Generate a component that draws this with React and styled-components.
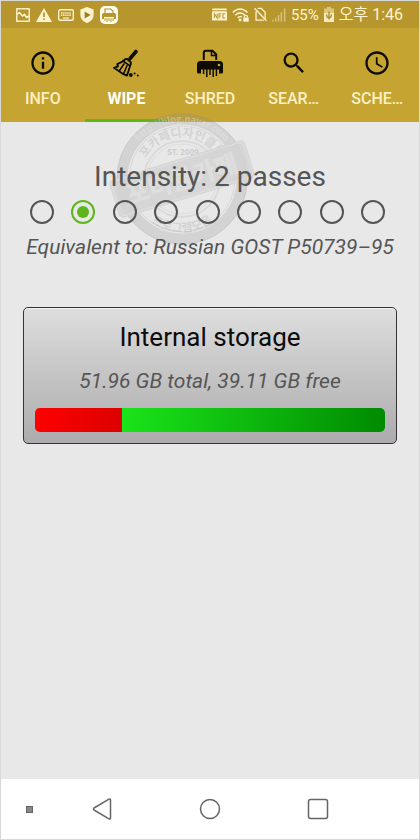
import { useState } from "react";
import styled, { createGlobalStyle } from "styled-components";
import { MdOutlineInfo, MdSearch, MdAccessTime } from "react-icons/md";

const INTENSITY_LEVELS = [1, 2, 3, 4, 5, 6, 7, 8, 9];
const STORAGE = { name: "Internal storage", total: 51.96, free: 39.11 };

const PictureIcon = () => (
  <svg width="14" height="14" viewBox="0 0 14 14" fill="none" stroke="currentColor">
    <rect x="0.8" y="0.8" width="12.4" height="12.4" strokeWidth="1.4" />
    <path d="M1 6.5 3.5 4.5 6.5 8 8.5 6.5 10.5 9.5 13 8" strokeWidth="1.6" />
  </svg>
);

const WarningIcon = () => (
  <svg width="16" height="14" viewBox="0 0 16 14">
    <path d="M8 0 16 14H0z" fill="currentColor" />
    <path d="M8 4.5V9M8 10.5V12" stroke="#b8962e" strokeWidth="1.8" />
  </svg>
);

const KeyboardIcon = () => (
  <svg width="16" height="12" viewBox="0 0 16 12" fill="none" stroke="currentColor">
    <rect x="0.7" y="0.7" width="14.6" height="10.6" rx="1.5" strokeWidth="1.4" />
    <path d="M3 4H13M3 6.3H13" strokeWidth="1.4" strokeDasharray="1.4 0.7" />
    <path d="M5 9H11" strokeWidth="1.2" />
  </svg>
);

const ShieldIcon = () => (
  <svg width="14" height="16" viewBox="0 0 14 16">
    <path d="M7 0 13.6 2.4V8C13.6 12 10.5 14.8 7 16 3.5 14.8.4 12 .4 8V2.4z" fill="currentColor" />
    <path d="M4.6 4.6 10.6 8 4.6 11.4z" fill="#a07f22" />
  </svg>
);

const PrinterBadge = () => (
  <svg width="18" height="18" viewBox="0 0 18 18">
    <rect width="18" height="18" rx="5" fill="#fffdf2" />
    <path d="M5 7V3H10.5L13 5V7" fill="none" stroke="#b8962e" strokeWidth="1.2" />
    <path d="M2 8.5Q2 7 3.5 7H14.5Q16 7 16 8.5V13H14V11H4V13H2z" fill="#b8962e" />
    <path d="M5 12V15M7 12V16M9 12V15M11 12V16M13 12V15" stroke="#b8962e" />
  </svg>
);

const NfcIcon = () => (
  <svg width="15" height="13" viewBox="0 0 16 13">
    <rect width="16" height="2" rx="1" fill="currentColor" />
    <rect y="3" width="16" height="10" rx="1" fill="currentColor" />
    <path
      d="M2.5 10.5V5.5L5.5 10.5V5.5M7.5 10.8V5.7H10M7.5 8H9.7M14 5.7H11.7V10.3H14"
      fill="none"
      stroke="#b8962e"
      strokeWidth="1.1"
    />
  </svg>
);

const WifiIcon = () => (
  <svg width="17" height="14" viewBox="0 0 17 14" fill="none" stroke="currentColor" strokeWidth="1.5">
    <path d="M0.8 4.5Q8 -2.5 15.5 4.5M3.2 7.2Q8 2.5 13 7.2M5.6 9.8Q8 7.5 10 9" />
    <circle cx="8" cy="12" r="1.4" fill="currentColor" stroke="none" />
    <rect x="11.2" y="9.5" width="5.5" height="4.2" fill="currentColor" stroke="none" />
    <path d="M12.5 9.5V8.2Q14 6.5 15.4 8.2V9.5" strokeWidth="1.1" />
  </svg>
);

const NoSimIcon = () => (
  <svg width="13" height="15" viewBox="0 0 14 15" fill="none" stroke="currentColor" strokeWidth="1.4">
    <path d="M4 1H8L12 5V12M10.5 13.5H2.2V4" />
    <path d="M0.6 0.8 13.4 14.2" />
  </svg>
);

const SignalIcon = () => (
  <svg width="14" height="14" viewBox="0 0 15 14" stroke="currentColor" strokeWidth="1.5" opacity="0.5">
    <path d="M1 14V12M4 14V10M7 14V7M10 14V4M13.5 14V0" />
  </svg>
);

const BatteryIcon = () => (
  <svg width="10" height="15" viewBox="0 0 10 15">
    <path d="M3 0H7V1.5H10V15H0V1.5H3z" fill="currentColor" opacity="0.5" />
    <path d="M0 6H10V15H0z" fill="currentColor" opacity="0.8" />
    <path
      d="M5 4.5V12.5M2.8 7.5V9Q2.8 10.5 5 10.8 7.2 10.5 7.2 9V7.5"
      fill="none"
      stroke="#a98722"
      strokeWidth="1.3"
    />
  </svg>
);

const BroomIcon = () => (
  <svg width="28" height="28" viewBox="0 0 28 28" fill="none" stroke="currentColor" strokeLinecap="round" strokeLinejoin="round">
    <path d="M24 2.5 18.5 9" strokeWidth="3.6" />
    <path d="M18.5 9 16.5 11.5" strokeWidth="2" />
    <path d="M12 11.2Q14.5 9 17.2 11.2 19.8 13.4 18.4 16L15 26.5 11.5 25.2 2 18.8 6 17.4 5.2 15.2 9.5 13.2z" strokeWidth="1.9" />
    <path d="M11 12 18 16.8M12 15 7.5 21.5M15 16.8 11.5 25" strokeWidth="1.6" />
    <circle cx="18.8" cy="26" r="1.9" fill="currentColor" stroke="none" />
    <circle cx="22.6" cy="24.4" r="1" fill="currentColor" stroke="none" />
    <circle cx="25.8" cy="26.6" r="1" fill="currentColor" stroke="none" />
  </svg>
);

const ShredderIcon = () => (
  <svg width="28" height="28" viewBox="0 0 28 28">
    <path d="M7.8 11V4Q7.8 1.8 10 1.8H16.5L20.2 5.5V11" fill="none" stroke="currentColor" strokeWidth="2" />
    <path d="M15.5 2V6.5H20" fill="none" stroke="currentColor" strokeWidth="1.6" />
    <path
      d="M1 15.5Q1 12 4.5 12H23.5Q27 12 27 15.5V23Q27 24.5 25.5 24.5H23V20.5H5V24.5H2.5Q1 24.5 1 23z"
      fill="currentColor"
    />
    <path d="M7.6 20V25M10.8 20V28M14 20V26M17.2 20V28M20.4 20V27" stroke="currentColor" strokeWidth="1.5" />
    <circle cx="23" cy="16" r="1.3" fill="#c6a432" />
  </svg>
);

const StampMark = () => (
  <svg width="148" height="134" viewBox="0 0 148 134" aria-hidden="true">
    <defs>
      <path id="outerArc" d="M16 67A57 57 0 0 1 130 67" />
      <path id="innerArc" d="M31 67A42 42 0 0 1 115 67" />
      <path id="lowerArc" d="M20 67A53 53 0 0 0 126 67" />
    </defs>
    <g fill="none" stroke="#8a8a8a">
      <circle cx="73" cy="67" r="60" strokeWidth="11" opacity="0.22" />
      <circle cx="73" cy="67" r="65" opacity="0.15" />
      <circle cx="73" cy="67" r="53" opacity="0.2" />
      <circle cx="73" cy="67" r="38" strokeWidth="2" opacity="0.14" />
      <circle cx="73" cy="67" r="35" opacity="0.12" />
    </g>
    <g fontFamily="'Noto Sans CJK KR', sans-serif" fontWeight="700" textAnchor="middle">
      <text fontSize="9" fill="#eeeeee" opacity="0.35">
        <textPath href="#outerArc" startOffset="50%">http://blog.naver.com</textPath>
      </text>
      <text fontSize="12" fill="#8a8a8a" opacity="0.22">
        <textPath href="#innerArc" startOffset="50%">포카페디자인클럽</textPath>
      </text>
      <text fontSize="12" fill="#8a8a8a" opacity="0.22">
        <textPath href="#lowerArc" startOffset="50%">프로그램모음</textPath>
      </text>
      <text x="74" y="43" fontSize="8" fill="#8a8a8a" opacity="0.3">ST. 2009</text>
    </g>
    <g transform="rotate(-17 73 67)">
      <rect x="2" y="47" width="142" height="40" rx="5" fill="#d2d2d2" opacity="0.85" />
      <rect x="4" y="49" width="138" height="36" rx="4" fill="none" stroke="#e2e2e2" opacity="0.7" />
      <text
        x="73"
        y="76"
        fontSize="25"
        fontWeight="900"
        fontFamily="'Noto Sans CJK KR', sans-serif"
        textAnchor="middle"
        fill="#e4e4e4"
        opacity="0.6"
      >
        포터블카페
      </text>
    </g>
  </svg>
);

const BackIcon = () => (
  <svg width="20" height="22" viewBox="0 0 20 22" fill="none" stroke="#666" strokeWidth="1.5" strokeLinejoin="round">
    <path d="M17 1.2Q18.5.6 18.5 2V20Q18.5 21.4 17 20.8L2 12Q.8 11 2 10z" />
  </svg>
);

const HomeIcon = () => (
  <svg width="22" height="22" viewBox="0 0 22 22" fill="none" stroke="#666" strokeWidth="1.5">
    <circle cx="11" cy="11" r="9.5" />
  </svg>
);

const RecentIcon = () => (
  <svg width="22" height="22" viewBox="0 0 22 22" fill="none" stroke="#666" strokeWidth="1.5">
    <rect x="1.5" y="1.5" width="19" height="19" rx="2" />
  </svg>
);

const TABS = [
  { id: "info", label: "INFO", icon: <MdOutlineInfo size={28} /> },
  { id: "wipe", label: "WIPE", icon: <BroomIcon /> },
  { id: "shred", label: "SHRED", icon: <ShredderIcon /> },
  { id: "search", label: "SEAR…", icon: <MdSearch size={28} /> },
  { id: "schedule", label: "SCHE…", icon: <MdAccessTime size={28} /> },
];

const App = () => {
  const [tab, setTab] = useState("wipe");
  const [passes, setPasses] = useState(2);
  const used = ((STORAGE.total - STORAGE.free) / STORAGE.total) * 100;

  return (
    <>
      <GlobalStyle />
      <Screen>
        <StatusBar>
          <StatusGroup $gap={6}>
            <PictureIcon />
            <WarningIcon />
            <KeyboardIcon />
            <ShieldIcon />
            <PrinterBadge />
          </StatusGroup>
          <StatusGroup $gap={5}>
            <NfcIcon />
            <WifiIcon />
            <NoSimIcon />
            <SignalIcon />
            <Battery>55%</Battery>
            <BatteryIcon />
            <Clock>오후 1:46</Clock>
          </StatusGroup>
        </StatusBar>

        <TabBar>
          {TABS.map(({ id, label, icon }) => (
            <Tab key={id} type="button" $active={tab === id} onClick={() => setTab(id)}>
              {icon}
              <span>{label}</span>
            </Tab>
          ))}
        </TabBar>

        <Content>
          <Stamp>
            <StampMark />
          </Stamp>

          <Intensity>
            <IntensityTitle>Intensity: {passes} passes</IntensityTitle>
            <Levels>
              {INTENSITY_LEVELS.map((level) => (
                <Radio
                  key={level}
                  name="intensity"
                  aria-label={`${level} passes`}
                  checked={passes === level}
                  onChange={() => setPasses(level)}
                />
              ))}
            </Levels>
            <Note>Equivalent to: Russian GOST P50739–95</Note>
          </Intensity>

          <StorageCard type="button">
            <StorageName>{STORAGE.name}</StorageName>
            <Note as="span">
              {STORAGE.total} GB total, {STORAGE.free} GB free
            </Note>
            <UsageBar>
              <Used style={{ width: `${used}%` }} />
            </UsageBar>
          </StorageCard>
        </Content>

        <NavBar>
          <NavButton type="button" aria-label="Hide bar">
            <Dot />
          </NavButton>
          <NavButton type="button" aria-label="Back">
            <BackIcon />
          </NavButton>
          <NavButton type="button" aria-label="Home">
            <HomeIcon />
          </NavButton>
          <NavButton type="button" aria-label="Recent apps">
            <RecentIcon />
          </NavButton>
        </NavBar>
      </Screen>
    </>
  );
};

const GlobalStyle = createGlobalStyle`
  * {
    box-sizing: border-box;
  }

  body {
    margin: 0;
    font-family: Roboto, "Noto Sans CJK KR", sans-serif;
  }

  button {
    font: inherit;
    border: 0;
    padding: 0;
    background: none;
    cursor: pointer;
  }

  svg {
    display: block;
    flex: none;
  }
`;

const Screen = styled.div`
  display: flex;
  flex-direction: column;
  min-height: 100vh;
  border: 1px solid #d9d9d9;
  background: #e8e8e8;
`;

const StatusBar = styled.header`
  display: flex;
  align-items: center;
  justify-content: space-between;
  height: 27px;
  padding: 0 16px 0 15px;
  background: #b8962e;
  color: #fdf3cf;
`;

const StatusGroup = styled.div`
  display: flex;
  align-items: center;
  gap: ${({ $gap }) => $gap}px;
`;

const Battery = styled.span`
  font-size: 15px;
`;

const Clock = styled.span`
  font-size: 16px;
  line-height: 20px;
  white-space: nowrap;
`;

const TabBar = styled.nav`
  display: grid;
  grid-template-columns: repeat(5, 1fr);
  height: 94px;
  background: #c6a432;
`;

const Tab = styled.button`
  display: flex;
  flex-direction: column;
  align-items: center;
  gap: 12px;
  padding-top: 21px;
  border-bottom: 3px solid ${({ $active }) => ($active ? "#5fb51c" : "transparent")};
  color: #0d0b02;

  span {
    font-size: 16px;
    line-height: 20px;
    font-weight: ${({ $active }) => ($active ? 700 : 500)};
    color: ${({ $active }) => ($active ? "#fffef8" : "#fbf0c4")};
  }
`;

const Content = styled.main`
  position: relative;
  flex: 1;
  display: flex;
  flex-direction: column;
  gap: 45px;
  padding: 38px 22px;
`;

/* overlaps the tab bar and sits behind the heading */
const Stamp = styled.div`
  position: absolute;
  top: -10px;
  left: 108px;
  pointer-events: none;
`;

const Intensity = styled.section`
  position: relative;
  display: flex;
  flex-direction: column;
  align-items: center;
`;

const IntensityTitle = styled.h1`
  margin: 0;
  font-size: 28px;
  line-height: 34px;
  font-weight: 400;
  color: #555;
`;

const Levels = styled.div`
  display: flex;
  align-self: stretch;
  justify-content: space-between;
  margin: 6px 0 8px;
  padding: 0 12px 0 7px;
`;

const Radio = styled.input.attrs({ type: "radio" })`
  appearance: none;
  display: grid;
  place-items: center;
  width: 24px;
  height: 24px;
  margin: 0;
  border: 2px solid #555;
  border-radius: 50%;
  cursor: pointer;

  &:checked {
    border-color: #5fb51c;
  }

  &:checked::before {
    content: "";
    width: 12px;
    height: 12px;
    border-radius: 50%;
    background: #5fb51c;
  }
`;

const Note = styled.p`
  margin: 0;
  font-size: 21px;
  line-height: 30px;
  font-style: italic;
  white-space: nowrap;
  color: #555;
`;

const StorageCard = styled.button`
  position: relative;
  display: flex;
  flex-direction: column;
  align-items: center;
  padding: 12px 11px 11px;
  border: 1px solid #333;
  border-radius: 5px;
  background: linear-gradient(#dedede, #adabad);
  box-shadow: inset 0 1px #f4f4f4;
`;

const StorageName = styled.span`
  margin-bottom: 12px;
  font-size: 26px;
  line-height: 34px;
  color: #0c0c0c;
`;

const UsageBar = styled.div`
  align-self: stretch;
  height: 24px;
  margin-top: 12px;
  border-radius: 5px;
  overflow: hidden;
  background: linear-gradient(100deg, #1bea1b 20%, #008a00);
`;

const Used = styled.div`
  height: 100%;
  background: linear-gradient(100deg, #ff0000, #dc0000);
`;

const NavBar = styled.nav`
  display: grid;
  grid-template-columns: 38px repeat(3, 1fr);
  height: 60px;
  padding: 0 47px 0 9px;
  background: #fff;
`;

const NavButton = styled.button`
  display: flex;
  align-items: center;
  justify-content: center;
`;

const Dot = styled.span`
  width: 7px;
  height: 7px;
  border: 1px solid #666;
  background: #888;
`;

export default App;
